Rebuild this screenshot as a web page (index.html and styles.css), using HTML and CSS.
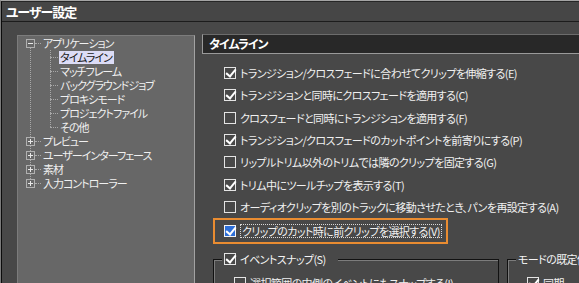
FILE: index.html
```html
<!DOCTYPE html>
<html lang="ja">

<head>
  <meta charset="UTF-8">
  <title>ユーザー設定</title>
  <link rel="stylesheet" href="styles.css">
</head>

<body>
  <div class="win">
    <div class="win-title">ユーザー設定</div>

    <div class="win-body">
      <!-- 左: カテゴリツリー -->
      <div class="tree-pane">
        <ul class="tree">
          <li>
            <div class="tree-row"><span class="tree-exp open"></span><span class="tree-dash"></span><span class="tree-lbl">アプリケーション</span></div>
            <ul class="tree-kids">
              <li class="tree-row kid"><span class="tree-dash long"></span><span class="tree-lbl sel">タイムライン</span></li>
              <li class="tree-row kid"><span class="tree-dash long"></span><span class="tree-lbl">マッチフレーム</span></li>
              <li class="tree-row kid"><span class="tree-dash long"></span><span class="tree-lbl">バックグラウンドジョブ</span></li>
              <li class="tree-row kid"><span class="tree-dash long"></span><span class="tree-lbl">プロキシモード</span></li>
              <li class="tree-row kid"><span class="tree-dash long"></span><span class="tree-lbl">プロジェクトファイル</span></li>
              <li class="tree-row kid"><span class="tree-dash long"></span><span class="tree-lbl">その他</span></li>
            </ul>
          </li>
          <li><div class="tree-row"><span class="tree-exp"></span><span class="tree-dash"></span><span class="tree-lbl">プレビュー</span></div></li>
          <li><div class="tree-row"><span class="tree-exp"></span><span class="tree-dash"></span><span class="tree-lbl">ユーザーインターフェース</span></div></li>
          <li><div class="tree-row"><span class="tree-exp"></span><span class="tree-dash"></span><span class="tree-lbl">素材</span></div></li>
          <li><div class="tree-row"><span class="tree-exp"></span><span class="tree-dash"></span><span class="tree-lbl">入力コントローラー</span></div></li>
        </ul>
      </div>

      <!-- 右: 設定ページ -->
      <div class="page">
        <div class="page-head">タイムライン</div>

        <ul class="opts">
          <li class="opt"><span class="cb on"></span>トランジション/クロスフェードに合わせてクリップを伸縮する(E)</li>
          <li class="opt"><span class="cb on"></span>トランジションと同時にクロスフェードを適用する(C)</li>
          <li class="opt"><span class="cb"></span>クロスフェードと同時にトランジションを適用する(F)</li>
          <li class="opt"><span class="cb on"></span>トランジション/クロスフェードのカットポイントを前寄りにする(P)</li>
          <li class="opt"><span class="cb"></span>リップルトリム以外のトリムでは隣のクリップを固定する(G)</li>
          <li class="opt"><span class="cb on"></span>トリム中にツールチップを表示する(T)</li>
          <li class="opt"><span class="cb"></span>オーディオクリップを別のトラックに移動させたとき、パンを再設定する(A)</li>
        </ul>

        <div class="opt focus-row"><span class="cb on active"></span><span class="focus-text">クリップのカット時に前クリップを選択する(V)</span></div>

        <div class="groups">
          <fieldset class="grp grp-snap">
            <legend><span class="cb on"></span>イベントスナップ(S)</legend>
            <div class="opt sub"><span class="cb"></span>選択範囲の内側のイベントにもスナップする(I)</div>
          </fieldset>
          <fieldset class="grp grp-mode">
            <legend>モードの既定値</legend>
            <div class="opt sub"><span class="cb on"></span>同期</div>
          </fieldset>
        </div>
      </div>
    </div>
  </div>
</body>

</html>
```

FILE: styles.css
```css
* {
  font-family: "Noto Sans CJK JP", "Noto Sans", sans-serif;
  font-feature-settings: "palt";
  margin: 0;
  padding: 0;
  box-sizing: border-box;
}

html,
body {
  width: 579px;
  height: 283px;
  overflow: hidden;
  background: #484848;
}

body {
  border-top: 1px solid #a4a4a4;
  border-left: 1px solid #7a7a7a;
}

.win {
  height: 100%;
  border-top: 1px solid #262626;
  border-left: 1px solid #0c0c0c;
  color: #f0f0f0;
  font-size: 11px;
  letter-spacing: -0.6px;
}

.win-title {
  height: 20px;
  line-height: 19px;
  padding-left: 4px;
  border-bottom: 1px solid #1c1c1c;
  background: #464646;
  color: #ffffff;
  font-size: 13px;
  font-weight: 700;
  letter-spacing: -1px;
}

.win-body {
  display: flex;
  padding: 12px 0 0 15px;
}

/* ツリー */
.tree-pane {
  flex-shrink: 0;
  width: 178px;
  height: 260px;
  margin-top: 1px;
  margin-right: 7px;
  background: #676767;
  border-top: 1px solid #7c7c7c;
  border-left: 1px solid #7c7c7c;
  border-right: 1px solid #a2a2a2;
  letter-spacing: -1px;
}

.tree,
.tree ul {
  list-style: none;
}

.tree {
  position: relative;
}

.tree::before {
  content: "";
  position: absolute;
  left: 12px;
  top: 7px;
  bottom: 7px;
  border-left: 1px dotted #a8a8a8;
}

.tree-row {
  display: flex;
  align-items: center;
  height: 14px;
  line-height: 14px;
  white-space: nowrap;
}

.tree-exp {
  position: relative;
  z-index: 1;
  width: 9px;
  height: 9px;
  margin-left: 8px;
  border: 1px solid #b0b0b0;
  background: #676767;
}

.tree-exp::before {
  content: "";
  position: absolute;
  left: 1px;
  top: 3px;
  width: 5px;
  height: 1px;
  background: #e8e8e8;
}

.tree-exp:not(.open)::after {
  content: "";
  position: absolute;
  left: 3px;
  top: 1px;
  width: 1px;
  height: 5px;
  background: #e8e8e8;
}

.tree-dash {
  width: 6px;
  height: 1px;
  margin-right: 1px;
  border-top: 1px dotted #a8a8a8;
}

.tree-dash.long {
  width: 8px;
}

.tree-kids {
  position: relative;
}

.tree-kids::before {
  content: "";
  position: absolute;
  left: 32px;
  top: 0;
  bottom: 7px;
  border-left: 1px dotted #a8a8a8;
}

.tree-row.kid {
  padding-left: 32px;
}

.tree-lbl {
  display: inline-block;
  height: 13px;
  line-height: 13px;
  padding: 0 2px 0 1px;
}

.tree-lbl.sel {
  background: #dcdcf6;
  color: #1a1a1a;
}

/* 設定ページ */
.page {
  flex-shrink: 0;
  width: 420px;
}

.page-head {
  height: 20px;
  line-height: 18px;
  padding-left: 6px;
  background: #282828;
  border: 1px solid #9a9a9a;
  border-top-color: #6c6c6c;
  color: #ffffff;
  font-size: 12px;
  font-weight: 700;
  letter-spacing: -1px;
}

.opts {
  list-style: none;
  margin-top: 8px;
}

.opt {
  display: flex;
  align-items: center;
  column-gap: 4px;
  height: 22.33px;
  padding-left: 22px;
  white-space: nowrap;
}

.cb {
  position: relative;
  flex-shrink: 0;
  width: 12px;
  height: 12px;
  border: 1px solid #e4e4e4;
}

.cb.on::after {
  content: "";
  position: absolute;
  left: 3px;
  top: -1px;
  width: 4px;
  height: 8px;
  border: solid #ffffff;
  border-width: 0 2px 2px 0;
  transform: rotate(40deg);
}

.cb.active {
  background: #2d6fd8;
  border-color: #f4f4f4;
}

.opt.focus-row {
  width: 235px;
  height: 26px;
  margin-left: 11px;
  padding-left: 9px;
  border: 2px solid #e98c31;
}

.focus-text {
  line-height: 12px;
  padding: 0 1px;
  border: 1px dotted #d8d8d8;
}

/* グループ */
.groups {
  display: flex;
  column-gap: 8px;
  margin-top: 4px;
  margin-left: 11px;
}

.grp {
  flex-shrink: 0;
  height: 80px;
  padding: 0 0 0 8px;
  border: 1px solid #111111;
  box-shadow: inset 1px 1px 0 #7c7c7c;
}

.grp legend {
  display: flex;
  align-items: center;
  column-gap: 4px;
  height: 22px;
  padding: 0 12px 0 2px;
  background: #484848;
  color: #f4f4f4;
}

.grp-snap {
  width: 286px;
}

.grp-snap .opt.sub {
  padding-left: 12px;
  margin-top: 2px;
}

.grp-mode {
  width: 120px;
}

.grp-mode legend {
  padding: 0 2px;
}

.grp-mode .opt.sub {
  padding-left: 11px;
  margin-top: 2px;
}
```
